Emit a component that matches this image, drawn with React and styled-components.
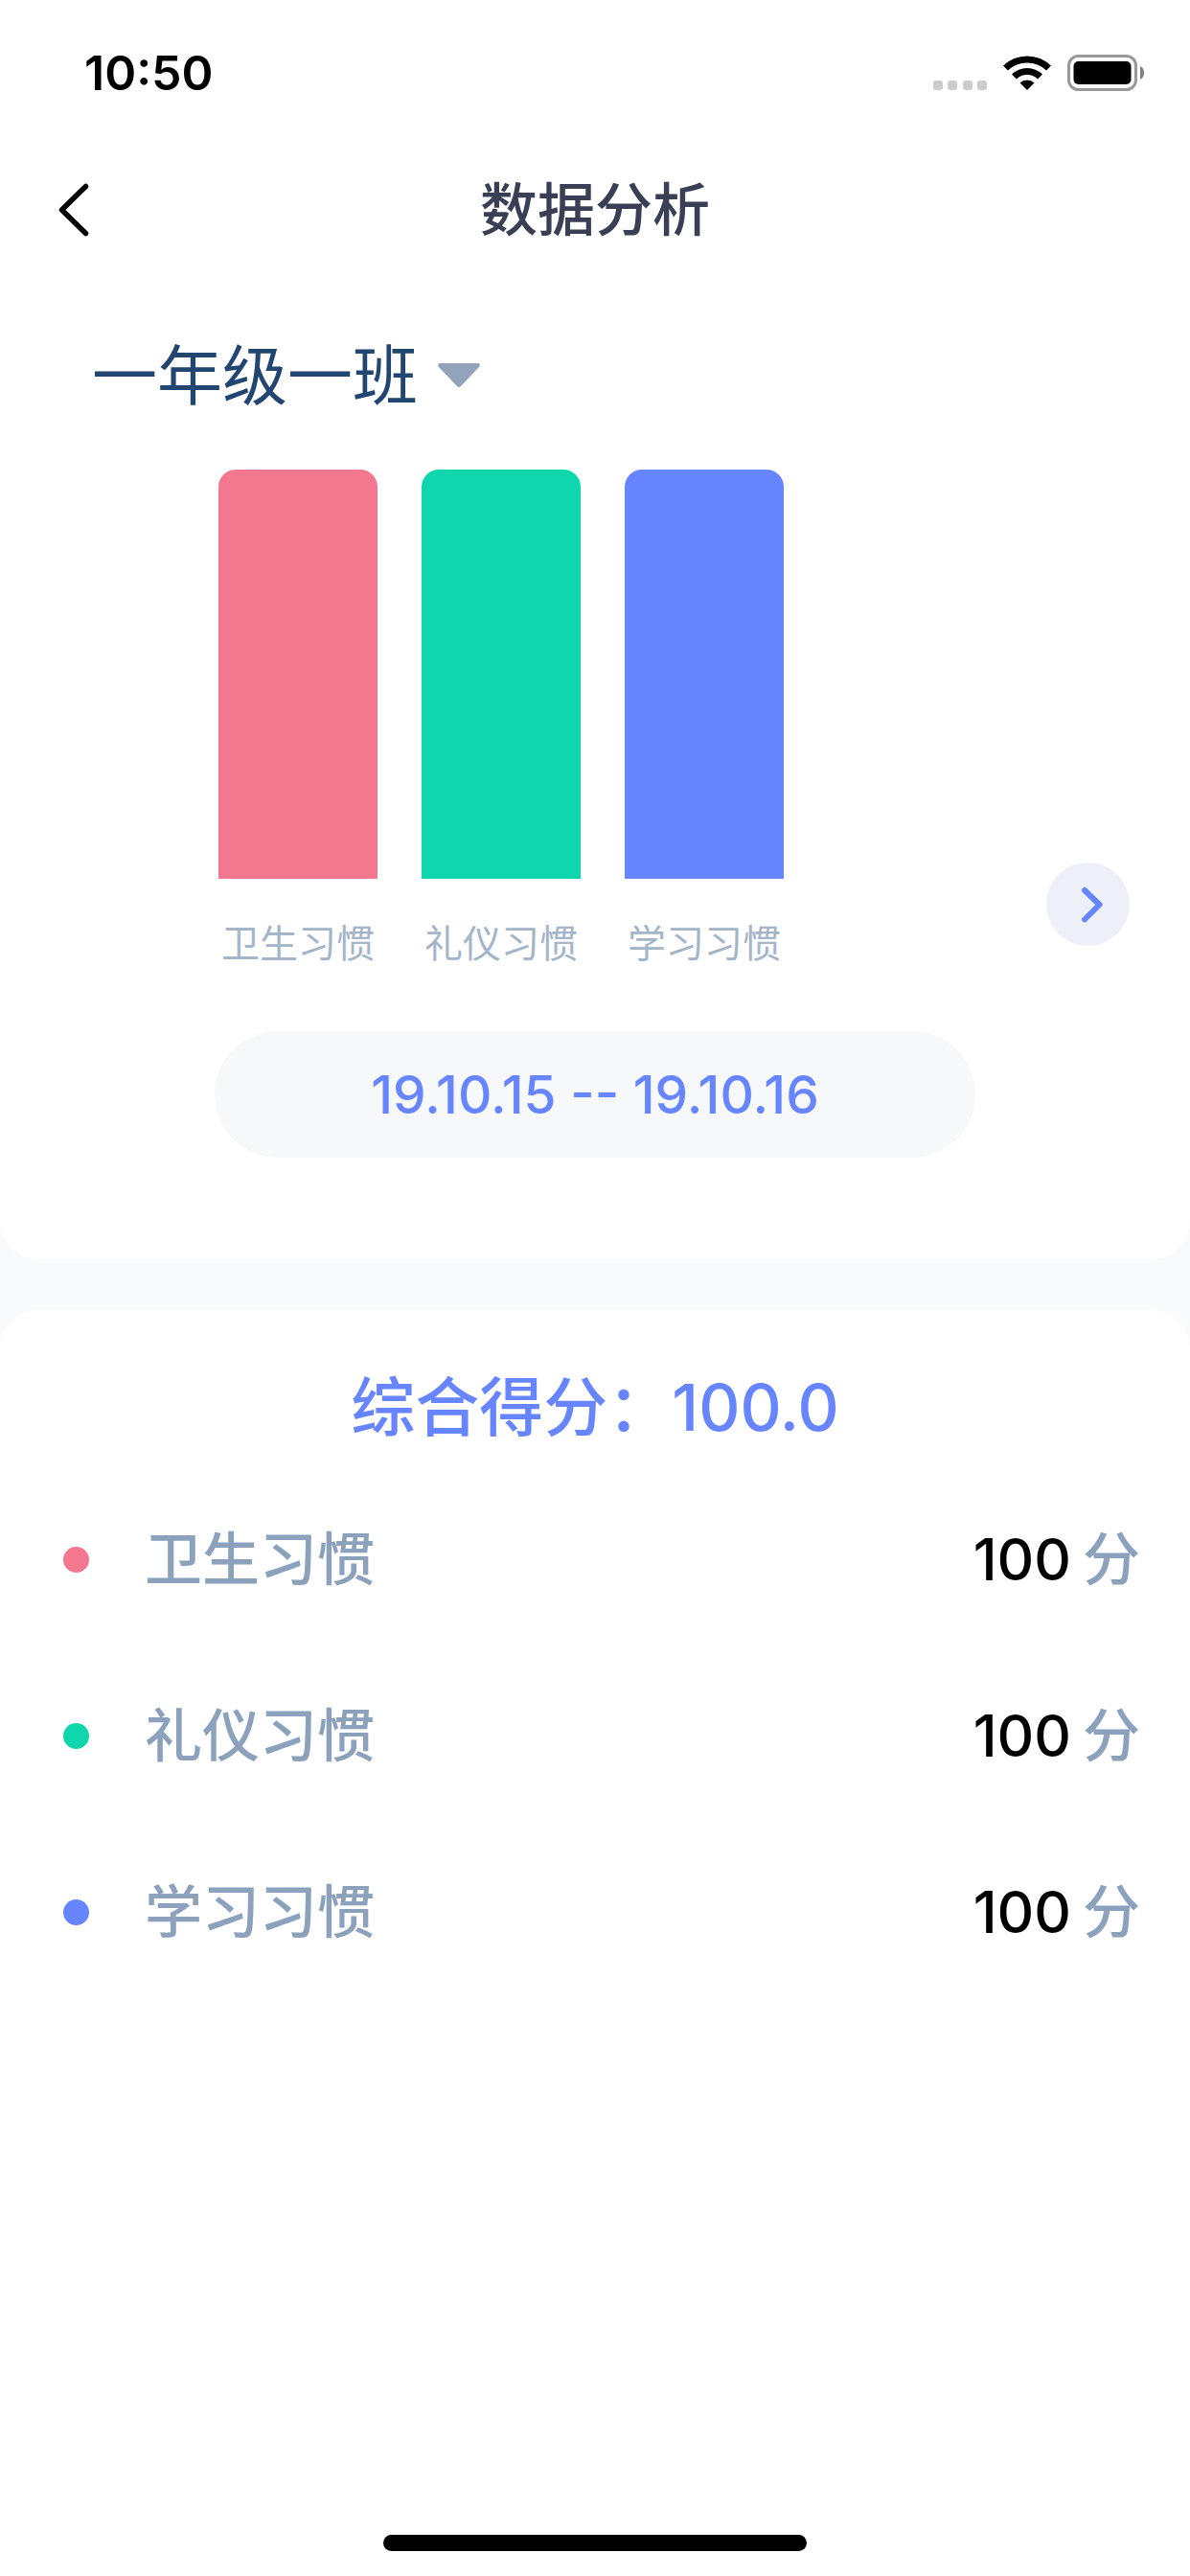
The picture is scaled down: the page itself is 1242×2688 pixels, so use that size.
import { useState } from "react";
import styled, { createGlobalStyle } from "styled-components";

const GlobalStyle = createGlobalStyle`
  * {
    box-sizing: border-box;
  }

  body {
    margin: 0;
    background-color: #f8fafc;
    font-family: Inter, "Noto Sans CJK SC", sans-serif;
  }

  button,
  select {
    font-family: inherit;
    border: none;
    padding: 0;
    cursor: pointer;
  }
`;

const Page = styled.main`
  min-height: 100vh;
  display: flex;
  flex-direction: column;
  gap: 53px;
`;

const ChartCard = styled.section`
  padding-bottom: 106px;
  border-radius: 0 0 40px 40px;
  background-color: #fff;
`;

const ScoreCard = styled.section`
  flex: 1;
  display: flex;
  flex-direction: column;
  padding: 52px 0 26px;
  border-radius: 40px 40px 0 0;
  background-color: #fff;
`;

const StatusBar = styled.div`
  height: 132px;
  padding: 20px 47px 0 88px;
  display: flex;
  justify-content: space-between;
  align-items: center;
`;

const Time = styled.time`
  font-size: 50px;
  line-height: 60px;
  font-weight: 600;
  color: #000;
`;

const NavBar = styled.header`
  height: 174px;
  padding: 0 60px;
  display: grid;
  grid-template-columns: 1fr auto 1fr;
  align-items: center;
`;

const BackButton = styled.button`
  justify-self: start;
  display: flex;
  background: none;
`;

const Title = styled.h1`
  margin: 0;
  font-size: 60px;
  line-height: 80px;
  font-weight: 500;
  color: #3a3f55;
`;

const ClassPicker = styled.label`
  margin: 36px 96px 0;
  display: flex;
  align-items: center;
  gap: 20px;

  select {
    appearance: none;
    background: none;
    font-size: 68px;
    line-height: 100px;
    color: #224672;
    outline: 0;
  }
`;

const Chart = styled.div`
  margin: 48px 63px 0 228px;
  display: flex;
  justify-content: space-between;
  align-items: flex-end;
`;

const Bars = styled.div`
  display: flex;
  align-items: flex-end;
  gap: 46px;
`;

const BarColumn = styled.figure`
  width: 166px;
  margin: 0;
  display: flex;
  flex-direction: column;
  align-items: center;
  gap: 38px;

  figcaption {
    font-size: 40px;
    line-height: 60px;
    color: #a5b5c9;
    white-space: nowrap;
  }
`;

const Bar = styled.div`
  width: 100%;
  border-radius: 18px 18px 0 0;
  background-color: ${(props) => props.$color};
`;

const NextButton = styled.button`
  width: 87px;
  height: 87px;
  margin-bottom: 28px;
  padding-left: 8px;
  border-radius: 50%;
  display: flex;
  justify-content: center;
  align-items: center;
  background-color: #edf0f6;
`;

const DateRange = styled.button`
  display: block;
  width: 64%;
  height: 132px;
  margin: 61px auto 0;
  border-radius: 66px;
  background-color: #f6f8fa;
  font-size: 55px;
  line-height: 64px;
  font-weight: 500;
  color: #6785ff;
`;

const Total = styled.h2`
  margin: 0;
  text-align: center;
  font-size: 67px;
  line-height: 100px;
  font-weight: 500;
  color: #6785ff;
`;

const ScoreList = styled.ul`
  flex: 1;
  margin: 16px 0 0;
  padding: 0 52px 0 66px;
  list-style: none;
`;

const ScoreRow = styled.li`
  height: 184px;
  display: flex;
  align-items: center;
  font-size: 60px;
  line-height: 80px;
  font-weight: 500;
  color: #8ca1bb;
`;

const Dot = styled.span`
  width: 27px;
  height: 27px;
  margin-right: 58px;
  border-radius: 50%;
  background-color: ${(props) => props.$color};
`;

const Score = styled.span`
  margin-left: auto;
  display: flex;
  gap: 12px;

  strong {
    font-weight: 500;
    color: #000;
  }
`;

const HomeIndicator = styled.div`
  align-self: center;
  width: 442px;
  height: 17px;
  border-radius: 9px;
  background-color: #000;
`;

const FULL_SCORE = 100;
const BAR_HEIGHT = 427;

const habits = [
  { name: "卫生习惯", score: 100, color: "#f3778f" },
  { name: "礼仪习惯", score: 100, color: "#10d6ae" },
  { name: "学习习惯", score: 100, color: "#6785ff" },
];

const classes = ["一年级一班", "一年级二班"];

function StatusIcons() {
  return (
    <svg width="222" height="40" viewBox="0 0 222 40" aria-hidden="true">
      <g fill="#ccc">
        <rect x="1" y="28" width="10" height="10" rx="3" />
        <rect x="16" y="28" width="10" height="10" rx="3" />
        <rect x="32" y="28" width="10" height="10" rx="3" />
        <rect x="47" y="28" width="10" height="10" rx="3" />
      </g>
      <path d="M74 12.500a36 36 0 0 1 50 0l-5 5a29 29 0 0 0-40 0z" />
      <path d="M83 21.500a23 23 0 0 1 32 0l-5 5a16 16 0 0 0-22 0z" />
      <path d="M91.500 30.500a11 11 0 0 1 15 0L99 38z" />
      <rect
        x="142.500"
        y="2.500"
        width="70"
        height="35"
        rx="10"
        fill="none"
        stroke="#999"
        strokeWidth="3"
      />
      <rect x="147.500" y="8" width="60" height="24" rx="5" />
      <path d="M217 13q4 2 4 7t-4 7z" fill="#808080" />
    </svg>
  );
}

export default function App() {
  const [currentClass, setCurrentClass] = useState(classes[0]);

  const total =
    habits.reduce((sum, habit) => sum + habit.score, 0) / habits.length;

  return (
    <Page>
      <GlobalStyle />
      <ChartCard>
        <StatusBar>
          <Time>10:50</Time>
          <StatusIcons />
        </StatusBar>
        <NavBar>
          <BackButton aria-label="返回">
            <svg width="34" height="58" viewBox="0 0 34 58" fill="none">
              <path
                d="M29.500 4.500L4.500 29l25 24.500"
                stroke="#000"
                strokeWidth="5.500"
                strokeLinecap="round"
                strokeLinejoin="round"
              />
            </svg>
          </BackButton>
          <Title>数据分析</Title>
        </NavBar>
        <ClassPicker>
          <select
            aria-label="班级"
            value={currentClass}
            onChange={(event) => setCurrentClass(event.target.value)}
          >
            {classes.map((name) => (
              <option key={name}>{name}</option>
            ))}
          </select>
          <svg width="44" height="26" viewBox="0 0 44 26" fill="#93a3bb">
            <path d="M2 0h40q3 1 1 4L24 24q-2 2-4 0L1 4Q-1 1 2 0z" />
          </svg>
        </ClassPicker>
        <Chart>
          <Bars>
            {habits.map(({ name, score, color }) => (
              <BarColumn key={name}>
                <Bar
                  $color={color}
                  style={{ height: (score / FULL_SCORE) * BAR_HEIGHT }}
                />
                <figcaption>{name}</figcaption>
              </BarColumn>
            ))}
          </Bars>
          <NextButton aria-label="下一页">
            <svg width="24" height="38" viewBox="0 0 24 38" fill="none">
              <path
                d="M4 4l15.500 15L4 34.500"
                stroke="#6785ff"
                strokeWidth="6"
                strokeLinecap="round"
                strokeLinejoin="round"
              />
            </svg>
          </NextButton>
        </Chart>
        <DateRange>19.10.15 -- 19.10.16</DateRange>
      </ChartCard>
      <ScoreCard>
        <Total>综合得分：{total.toFixed(1)}</Total>
        <ScoreList>
          {habits.map(({ name, score, color }) => (
            <ScoreRow key={name}>
              <Dot $color={color} />
              {name}
              <Score>
                <strong>{score}</strong>
                <span>分</span>
              </Score>
            </ScoreRow>
          ))}
        </ScoreList>
        <HomeIndicator />
      </ScoreCard>
    </Page>
  );
}
